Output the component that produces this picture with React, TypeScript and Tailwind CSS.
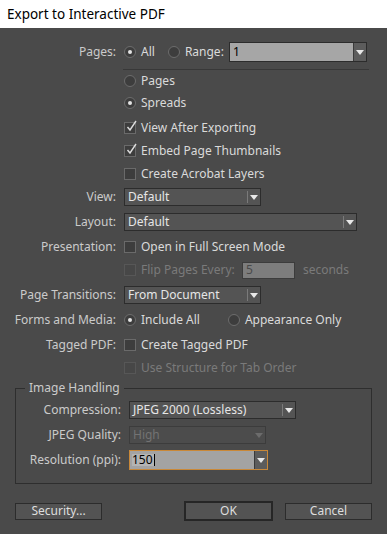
import React from "react";

const font = "font-['Noto_Sans',sans-serif]";

function Radio({ on }: { on?: boolean }) {
  return (
    <span className="flex h-[12px] w-[12px] shrink-0 items-center justify-center rounded-full border border-[#6c6c6c] bg-[#3d3d3d]">
      {on && <span className="h-[4px] w-[4px] rounded-full bg-[#e4e4e4]" />}
    </span>
  );
}

function Check({ on, disabled }: { on?: boolean; disabled?: boolean }) {
  return (
    <span
      className={
        "relative h-[12px] w-[12px] shrink-0 border " +
        (disabled ? "border-[#575757] bg-[#474747]" : "border-[#6a6a6a] bg-[#3d3d3d]")
      }
    >
      {on && (
        <svg className="absolute left-[1px] top-[-3px]" width="11" height="12" viewBox="0 0 11 12">
          <path d="M1.5 7 L4 10 L10 1" fill="none" stroke="#dcdcdc" strokeWidth="1.4" />
        </svg>
      )}
    </span>
  );
}

function Arrow({ dim }: { dim?: boolean }) {
  return (
    <svg width="8" height="5" viewBox="0 0 8 5">
      <path d="M0 0 H8 L4 5 Z" fill={dim ? "#6c6c6c" : "#e8e8e8"} />
    </svg>
  );
}

function Select({ value, w, disabled }: { value: string; w: string; disabled?: boolean }) {
  return (
    <div
      className={
        w +
        " flex h-[18px] items-center border " +
        (disabled ? "border-[#3c3c3c] bg-[#4c4c4c] text-[#737373]" : "border-[#2c2c2c] bg-[#545454] text-[#e6e6e6]")
      }
    >
      <span className="flex-1 pl-[3px] leading-none">{value}</span>
      {!disabled && <span className="h-[12px] w-px bg-[#7a7a7a]" />}
      <span className="flex w-[12px] justify-center">
        <Arrow dim={disabled} />
      </span>
    </div>
  );
}

function Row({
  label,
  className = "",
  labelW = "w-[124px]",
  children,
}: {
  label?: string;
  className?: string;
  labelW?: string;
  children: React.ReactNode;
}) {
  return (
    <div className={"flex h-[22px] items-center " + className}>
      <span className={labelW + " shrink-0 pr-[8px] text-right leading-none text-[#cbcbcb]"}>{label}</span>
      {children}
    </div>
  );
}

function Opt({ children, disabled }: { children: React.ReactNode; disabled?: boolean }) {
  return (
    <span className={"ml-[5px] leading-none " + (disabled ? "text-[#7a7a7a]" : "text-[#dadada]")}>{children}</span>
  );
}

function Button({ label, primary, w }: { label: string; primary?: boolean; w: string }) {
  return (
    <div
      className={
        w +
        " flex items-center justify-center bg-[#535353] text-[#dedede] leading-none " +
        (primary ? "h-[20px] border-2 border-[#262626]" : "h-[17px] border border-[#2c2c2c]")
      }
    >
      {label}
    </div>
  );
}

export default function App() {
  return (
    <div className={"flex h-[534px] w-[387px] flex-col overflow-hidden bg-[#4a4a4a] text-[12px] " + font}>
      <div className="flex h-[28px] shrink-0 items-center bg-white pl-[7px] text-[13.5px] text-black">
        Export to Interactive PDF
      </div>

      <Row label="Pages:" className="mt-[13px]">
        <Radio on />
        <Opt>All</Opt>
        <span className="ml-[13px]" />
        <Radio />
        <Opt>Range:</Opt>
        <div className="ml-auto mr-[20px] flex h-[20px] w-[138px] border border-[#2c2c2c]">
          <span className="flex flex-1 items-center bg-[#a6a6a6] pl-[3px] leading-none text-black">1</span>
          <span className="flex w-[13px] items-center justify-center border-l border-[#3a3a3a] bg-[#5c5c5c]">
            <Arrow />
          </span>
        </div>
      </Row>

      <div className="ml-[123px] mt-[6px] h-px w-[246px] bg-[#383838]" />

      <Row>
        <Radio />
        <Opt>Pages</Opt>
      </Row>
      <Row>
        <Radio on />
        <Opt>Spreads</Opt>
      </Row>
      <Row className="mt-[3px]">
        <Check on />
        <Opt>View After Exporting</Opt>
      </Row>
      <Row className="mt-[1px]">
        <Check on />
        <Opt>Embed Page Thumbnails</Opt>
      </Row>
      <Row className="mt-[1px]">
        <Check />
        <Opt>Create Acrobat Layers</Opt>
      </Row>
      <Row label="View:" className="mt-[1px]">
        <Select value="Default" w="w-[137px]" />
      </Row>
      <Row label="Layout:" className="mt-[3px]">
        <Select value="Default" w="w-[233px]" />
      </Row>
      <Row label="Presentation:" className="mt-[3px]">
        <Check />
        <Opt>Open in Full Screen Mode</Opt>
      </Row>
      <Row className="mt-[1px]">
        <Check disabled />
        <Opt disabled>Flip Pages Every:</Opt>
        <div className="ml-auto flex h-[17px] w-[53px] items-center border border-[#3c3c3c] bg-[#7d7d7d] pl-[3px] leading-none text-[#4a4a4a]">
          5
        </div>
        <span className="ml-[8px] mr-[38px] leading-none text-[#7a7a7a]">seconds</span>
      </Row>
      <Row label="Page Transitions:" className="mt-[3px]">
        <Select value="From Document" w="w-[137px]" />
      </Row>
      <Row label="Forms and Media:" className="mt-[3px]">
        <Radio on />
        <Opt>Include All</Opt>
        <span className="w-[28px]" />
        <Radio />
        <Opt>Appearance Only</Opt>
      </Row>
      <Row label="Tagged PDF:" className="mt-[3px]">
        <Check />
        <Opt>Create Tagged PDF</Opt>
      </Row>
      <Row className="mt-[1px]">
        <Check disabled />
        <Opt disabled>Use Structure for Tab Order</Opt>
      </Row>

      <fieldset className="mx-[15px] mt-[1px] border border-[#2e2e2e] pb-[12px] pt-[3px]">
        <legend className="ml-[9px] px-[4px] leading-[16px] text-[#cbcbcb]">Image Handling</legend>
        <Row label="Compression:" labelW="w-[113px]">
          <Select value="JPEG 2000 (Lossless)" w="w-[167px]" />
        </Row>
        <Row label="JPEG Quality:" labelW="w-[113px]" className="mt-[3px]">
          <Select value="High" w="w-[137px]" disabled />
        </Row>
        <Row label="Resolution (ppi):" labelW="w-[113px]" className="mt-[3px]">
          <div className="flex h-[20px] w-[139px] border border-[#c98838] bg-[#a3a3a3]">
            <span className="flex flex-1 items-center pl-[2px] leading-none text-black">
              <span className="border-r border-black bg-[#b4b4b4] pr-[1px]">150</span>
            </span>
            <span className="flex w-[13px] items-center justify-center border-l border-[#3a3a3a] bg-[#5c5c5c]">
              <Arrow />
            </span>
          </div>
        </Row>
      </fieldset>

      <div className="mx-[15px] mt-[17px] flex h-[20px] items-center">
        <Button label="Security..." w="w-[87px]" />
        <span className="flex-1" />
        <Button label="OK" primary w="w-[89px]" />
        <span className="w-[12px]" />
        <Button label="Cancel" w="w-[87px]" />
      </div>
    </div>
  );
}
